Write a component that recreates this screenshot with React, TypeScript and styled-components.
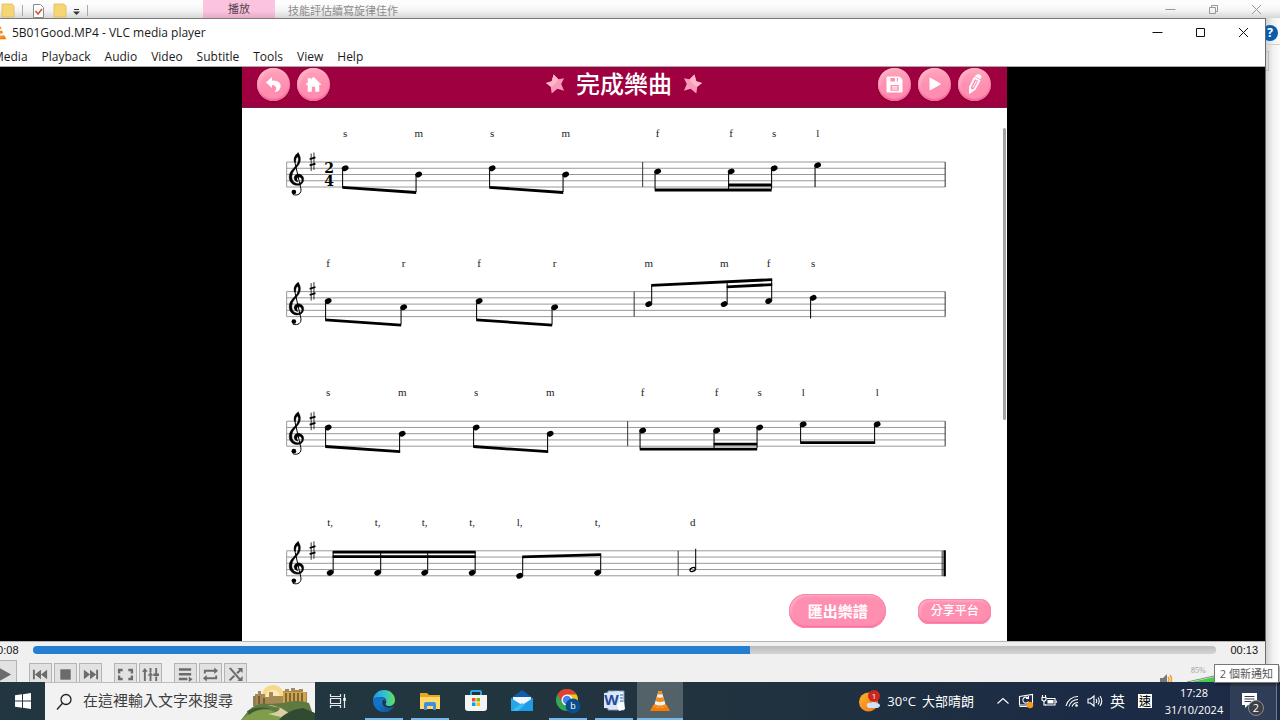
import React from "react";
import styled, { createGlobalStyle } from "styled-components";

const uiFont = '"Open Sans", "Noto Sans CJK TC", sans-serif';

const GlobalStyle = createGlobalStyle`
  *, *::before, *::after { box-sizing: border-box; }
  body { margin: 0; font-family: ${uiFont}; overflow: hidden; background: #fff; }
  button, input { font-family: inherit; margin: 0; }
  button { border: 0; padding: 0; background: none; color: inherit; }
  svg { display: block; flex: none; }
  h1, p { margin: 0; font-weight: inherit; }
`;

/* ---------- Desktop shell ---------- */

const Desktop = styled.div`
  height: 100vh;
  display: flex;
  flex-direction: column;
  overflow: hidden;
`;

const BackTitleBar = styled.div`
  flex: none;
  height: 18px;
  display: flex;
  align-items: stretch;
  padding-right: 2px;
  background: linear-gradient(#fdfdfd 20%, #f3f3f3 60%, #d6d6d6);
  color: #8b8b8b;
  font-size: 11px;
  overflow: hidden;
`;

const QuickAccess = styled.div`
  width: 203px;
  flex: none;
`;

const PlayTab = styled.div`
  width: 72px;
  flex: none;
  text-align: center;
  line-height: 18px;
  color: #54444b;
  background: linear-gradient(#fbc3de 60%, #e3abc6);
`;

const BackTitle = styled.div`
  flex: 1;
  padding-left: 13px;
  white-space: nowrap;
  line-height: 22px;
`;

const Middle = styled.div`
  flex: 1;
  min-height: 0;
  display: flex;
`;

const BackEdge = styled.div`
  flex: none;
  width: 14px;
  overflow: hidden;
  background: linear-gradient(to right, #d2d2d2, #f1f1f1 50%, #fcfcfc);
`;

const HelpStrip = styled.div`
  height: 27px;
  border-bottom: 1px solid #cfcfcf;
  padding-top: 7px;
`;

const HelpButton = styled.button`
  display: block;
  width: 16px;
  height: 16px;
  margin-left: -4px;
  border-radius: 50%;
  background: #0b5cad;
  color: #fff;
  font-size: 12px;
  font-weight: 700;
  line-height: 16px;
`;

const EdgeBox = styled.div`
  width: 3px;
  height: 20px;
  margin-top: 6px;
  border: 1px solid #bdbdbd;
  border-left: 0;
`;

/* ---------- Player window ---------- */

const PlayerWindow = styled.main`
  flex: 1;
  min-width: 0;
  margin-left: -16px;
  display: flex;
  flex-direction: column;
  background: #fff;
  border-top: 1px solid #7b7b7b;
  border-right: 1px solid #6b6b6b;
`;

const TitleBar = styled.div`
  flex: none;
  height: 27px;
  display: flex;
  align-items: center;
  gap: 5px;
  padding-left: 9px;
  font-size: 12px;
  color: #1a1a1a;
`;

const WindowTitle = styled.p`
  flex: 1;
  line-height: 18px;
`;

const WindowButtons = styled.div`
  display: flex;
`;

const WindowButton = styled.button<{ $faint?: boolean }>`
  width: 43px;
  height: 100%;
  display: flex;
  align-items: center;
  justify-content: center;
  color: ${(p) => (p.$faint ? "#999" : "#111")};
`;

const MenuBar = styled.nav`
  flex: none;
  height: 21px;
  display: flex;
  align-items: flex-end;
  gap: 14px;
  padding-left: 9px;
  border-bottom: 1px solid #a8a8a8;
`;

const MenuItem = styled.button`
  font-size: 12px;
  line-height: 18px;
  color: #1a1a1a;
`;

const Stage = styled.div`
  flex: 1;
  min-height: 0;
  display: flex;
  justify-content: center;
  background: #000;
`;

const Sheet = styled.section`
  position: relative;
  height: 100%;
  aspect-ratio: 4 / 3;
  display: flex;
  flex-direction: column;
  background: #fff;
`;

const SheetHeader = styled.header`
  flex: none;
  height: 41px;
  display: grid;
  grid-template-columns: 1fr auto 1fr;
  align-items: center;
  padding: 0 16px 6px 15px;
  background: #9f003f;
  border-bottom: 1px solid #6d2443;
`;

const ButtonGroup = styled.div<{ $end?: boolean }>`
  display: flex;
  gap: 7px;
  justify-content: ${(p) => (p.$end ? "flex-end" : "flex-start")};
`;

const RoundButton = styled.button`
  width: 33px;
  height: 33px;
  border-radius: 50%;
  display: flex;
  align-items: center;
  justify-content: center;
  color: #fff;
  background: linear-gradient(#ffa4bd, #ff8eb0 55%, #ff8fb2);
  box-shadow: inset 0 -2px 2px #f2659a, inset 2px 2px 3px #ffb3c6, 0 1px 2px #7a0030;
`;

const SheetTitle = styled.h1`
  display: flex;
  align-items: center;
  gap: 11px;
  color: #fff;
  font-size: 24px;
  font-weight: 500;
  line-height: 34px;
`;

const Score = styled.div`
  flex: 1;
  min-height: 0;
  & > svg { width: 100%; height: 100%; }
`;

const ScrollThumb = styled.div`
  position: absolute;
  top: 61px;
  right: 1px;
  width: 3px;
  height: 292px;
  border-radius: 2px;
  background: #a3a3a3;
`;

const SheetFooter = styled.footer`
  flex: none;
  height: 47px;
  display: flex;
  justify-content: flex-end;
  align-items: center;
  gap: 32px;
  padding: 0 16px 13px 0;
`;

const PillButton = styled.button<{ $large?: boolean }>`
  width: ${(p) => (p.$large ? 97 : 73)}px;
  height: ${(p) => (p.$large ? 34 : 25)}px;
  border-radius: ${(p) => (p.$large ? 17 : 11)}px;
  font-size: ${(p) => (p.$large ? 15 : 12)}px;
  font-weight: ${(p) => (p.$large ? 700 : 500)};
  line-height: 22px;
  white-space: nowrap;
  color: #fff;
  background: #ff8fb1;
  box-shadow: inset 0 0 0 1px #f88bad, inset 0 -2px 2px #fb6a9d, inset 2px 2px 3px #ffb3c6;
`;

const SeekRow = styled.div`
  flex: none;
  height: 17px;
  display: flex;
  align-items: center;
  gap: 14px;
  padding: 0 7px;
  background: #f0f0f0;
  border-top: 1px solid #b5b5b5;
  font: 11px/16px "Liberation Sans", sans-serif;
  color: #111;
`;

const SeekBar = styled.input`
  flex: 1;
  min-width: 0;
  height: 8px;
  appearance: none;
  border-radius: 4px;
  background: linear-gradient(to right, #247fd3 60.6%, transparent 60.6%), linear-gradient(#bcbcbc, #d4d4d4);
  &::-webkit-slider-thumb { appearance: none; width: 0; height: 0; }
`;

const Controls = styled.div`
  flex: none;
  height: 24px;
  display: flex;
  align-items: flex-start;
  gap: 12px;
  padding: 2px 42px 0 7px;
  background: #f0f0f0;
  overflow: hidden;
`;

const ControlGroup = styled.div`
  display: flex;
  gap: 2px;
  padding-top: 3px;
`;

const ControlButton = styled.button<{ $big?: boolean }>`
  width: ${(p) => (p.$big ? 26 : 23)}px;
  height: ${(p) => (p.$big ? 28 : 23)}px;
  display: flex;
  align-items: center;
  justify-content: center;
  border: 1px solid #b4b4b4;
  background: #e2e2e2;
  color: #6b6b6b;
`;

const Volume = styled.div`
  display: flex;
  align-items: flex-start;
  margin-left: auto;
  gap: 13px;
`;

const VolumeLabel = styled.span`
  display: block;
  font: 8px/8px "Liberation Serif", serif;
  color: #9a9a9a;
  padding: 7px 0 0 4px;
`;

/* ---------- Taskbar ---------- */

const Taskbar = styled.footer`
  position: relative;
  flex: none;
  height: 38px;
  display: flex;
  background: linear-gradient(to right, #213640, #22363f 35%, #20323f 60%, #1c2b45 85%, #1d2b46);
  color: #fff;
`;

const StartButton = styled.button`
  width: 45px;
  display: flex;
  align-items: center;
  justify-content: center;
`;

const SearchBox = styled.label`
  flex: none;
  width: 270px;
  display: flex;
  align-items: center;
  background: #f2f2f2;
  border-top: 1px solid #bdbdbd;
  padding-left: 11px;
  overflow: hidden;
`;

const SearchInput = styled.input`
  flex: 1;
  min-width: 0;
  height: 32px;
  border: 0;
  padding: 0 0 4px 11px;
  background: none;
  font-size: 15px;
  &::placeholder { color: #3d3d3d; opacity: 1; }
`;

const AppButton = styled.button<{ $running?: boolean; $active?: boolean }>`
  width: 46px;
  display: flex;
  align-items: center;
  justify-content: center;
  background-color: ${(p) => (p.$active ? "#536269" : "transparent")};
  background-image: ${(p) => (p.$running ? "linear-gradient(#76b9ed, #76b9ed)" : "none")};
  background-repeat: no-repeat;
  background-size: ${(p) => (p.$active ? "100% 2px" : "38px 2px")};
  background-position: center bottom;
`;

const Tray = styled.div`
  margin-left: auto;
  display: flex;
  align-items: center;
`;

const Weather = styled.button`
  display: flex;
  align-items: center;
  gap: 6px;
  font-size: 13px;
  line-height: 20px;
  padding-right: 21px;
  white-space: nowrap;
`;

const TrayIcons = styled.div`
  display: flex;
  align-items: center;
  gap: 6px;
`;

const TrayButton = styled.button`
  min-width: 15px;
  font-size: 15px;
  line-height: 20px;
  display: flex;
  justify-content: center;
`;

const InputMode = styled.button`
  width: 14px;
  height: 14px;
  margin: 0 6px 0 13px;
  background: #fff;
  color: #111;
  font-size: 12px;
  font-weight: 500;
  line-height: 13px;
`;

const Clock = styled.time`
  width: 72px;
  text-align: center;
  font-size: 11px;
  line-height: 17px;
`;

const NoticeButton = styled.button`
  position: relative;
  align-self: stretch;
  width: 46px;
  display: flex;
  align-items: center;
  justify-content: center;
  padding-right: 6px;
  background: #303d56;
`;

const NoticeCount = styled.span`
  position: absolute;
  right: 12px;
  bottom: 4px;
  width: 16px;
  height: 16px;
  border-radius: 50%;
  border: 1px solid #8b8f96;
  background: #3b4044;
  font-size: 11px;
  line-height: 14px;
`;

const ShowDesktop = styled.button`
  align-self: stretch;
  width: 4px;
  border-left: 1px solid #6f7a8c;
`;

const Tooltip = styled.div`
  position: absolute;
  right: 1px;
  bottom: 37px;
  padding: 0 5px;
  border: 1px solid #777;
  background: #fff;
  color: #575757;
  font-size: 11px;
  line-height: 17px;
  white-space: nowrap;
  box-shadow: 2px 2px 2px #0005;
`;

/* ---------- Score drawing ---------- */

type Note = { x: number; step: number; lyric: string; up?: boolean; half?: boolean };
type Beam = { x1: number; y1: number; x2: number; y2: number };
type StaffLine = { notes: Note[]; beams: Beam[]; stems: number[]; bar: number; time?: boolean; final?: boolean };

const GAP = 6.25;
const LEFT = 44.5;
const RIGHT = 703;

/* step counts half spaces down from the top line; beams and stem ends are measured from the top line */
const staves: StaffLine[] = [
  {
    time: true,
    bar: 400.5,
    notes: [
      { x: 103, step: 2, lyric: "s" }, { x: 176.5, step: 4, lyric: "m" },
      { x: 250, step: 2, lyric: "s" }, { x: 323.5, step: 4, lyric: "m" },
      { x: 415.5, step: 3, lyric: "f" }, { x: 489, step: 3, lyric: "f" },
      { x: 532, step: 2, lyric: "s" }, { x: 575.5, step: 1, lyric: "l" },
    ],
    stems: [25, 30, 25, 30, 27, 27, 27, 25],
    beams: [
      { x1: 100, y1: 25.3, x2: 174, y2: 30.5 }, { x1: 247, y1: 25.3, x2: 321, y2: 30.5 },
      { x1: 412.5, y1: 28, x2: 529.5, y2: 28 }, { x1: 486, y1: 23, x2: 529.5, y2: 23 },
    ],
  },
  {
    bar: 392,
    notes: [
      { x: 86, step: 3, lyric: "f" }, { x: 161.5, step: 5, lyric: "r" },
      { x: 237, step: 3, lyric: "f" }, { x: 312.5, step: 5, lyric: "r" },
      { x: 406.5, step: 4, lyric: "m", up: true }, { x: 482, step: 4, lyric: "m", up: true },
      { x: 526.5, step: 3, lyric: "f", up: true }, { x: 571, step: 2, lyric: "s" },
    ],
    stems: [28, 33, 28, 33, -6, -9, -12, 27],
    beams: [
      { x1: 83, y1: 28.3, x2: 159, y2: 33.5 }, { x1: 234, y1: 28.3, x2: 310, y2: 33.5 },
      { x1: 409, y1: -6.3, x2: 530, y2: -12 }, { x1: 484.5, y1: -4.800, x2: 530, y2: -7 },
    ],
  },
  {
    bar: 385.5,
    notes: [
      { x: 86, step: 2, lyric: "s" }, { x: 160, step: 4, lyric: "m" },
      { x: 234, step: 2, lyric: "s" }, { x: 308, step: 4, lyric: "m" },
      { x: 400.5, step: 3, lyric: "f" }, { x: 474.5, step: 3, lyric: "f" },
      { x: 517.5, step: 2, lyric: "s" }, { x: 561, step: 1, lyric: "l" }, { x: 635, step: 1, lyric: "l" },
    ],
    stems: [25, 30, 25, 30, 27, 27, 27, 21, 21],
    beams: [
      { x1: 83, y1: 25.3, x2: 158, y2: 30.5 }, { x1: 231, y1: 25.3, x2: 306, y2: 30.5 },
      { x1: 397.5, y1: 28, x2: 515, y2: 28 }, { x1: 471.5, y1: 23, x2: 515, y2: 23 },
      { x1: 558, y1: 21.5, x2: 633, y2: 21.5 },
    ],
  },
  {
    bar: 436,
    final: true,
    notes: [
      { x: 88, step: 7, lyric: "t,", up: true }, { x: 135.5, step: 7, lyric: "t,", up: true },
      { x: 182.5, step: 7, lyric: "t,", up: true }, { x: 230, step: 7, lyric: "t,", up: true },
      { x: 277.5, step: 8, lyric: "l,", up: true }, { x: 355.5, step: 7, lyric: "t,", up: true },
      { x: 450.5, step: 6, lyric: "d", up: true, half: true },
    ],
    stems: [1, 1, 1, 1, 6, 4, -2],
    beams: [
      { x1: 90.5, y1: 1.3, x2: 233.5, y2: 1.3 }, { x1: 90.5, y1: 5.8, x2: 233.5, y2: 5.8 },
      { x1: 280, y1: 6, x2: 359, y2: 3.8 },
    ],
  },
];

const Clef = () => (
  <g transform="translate(37.7 -41.7) scale(.3333)" fill="none" stroke="#000" strokeLinecap="round">
    <circle cx="42" cy="215" r="7" fill="#000" stroke="none" />
    <path d="M40 223C54 228 66 219 63 205L46 130C42 112 47 104 54 101" strokeWidth="3" />
    <path
      d="M55 98C63 108 64 123 56 134C49 144 37 152 36 168C35 180 42 189 53 190C62 190 67 184 66 178C65 171 59 169 54 171C50 173 50 179 54 185C45 183 42 176 43 171C45 163 53 160 60 162C69 165 73 173 71 181C69 191 60 196 50 195C37 194 28 184 28 171C28 151 45 143 52 131C57 122 57 112 53 110C50 109 47 117 47 127L43 124C41 111 49 100 55 98Z"
      fill="#000"
      stroke="#000"
      strokeWidth="1.500"
    />
  </g>
);

const Sharp = () => (
  <g stroke="#000" fill="none">
    <path d="M69-8.500V9M71.800-9.500V8" strokeWidth=".8" />
    <path d="M67.500-2.800L73.300-4.600M67.500 3.400L73.300 1.600" strokeWidth="1.800" />
  </g>
);

const Staff = ({ line, y }: { line: StaffLine; y: number }) => (
  <g transform={`translate(0 ${y})`}>
    <g stroke="#999" strokeWidth="1">
      {[0, 1, 2, 3, 4].map((n) => <path key={n} d={`M${LEFT} ${n * GAP}H${RIGHT}`} />)}
      <path d={`M${LEFT} 0V25`} />
    </g>
    <path d={`M${line.bar} 0V25M${line.final ? 700 : RIGHT} 0V25`} stroke="#333" strokeWidth="1" />
    {line.final && <path d="M702.5 -.5V25.5" stroke="#000" strokeWidth="2.4" />}
    <Clef />
    <Sharp />
    {line.time && (
      <g fontFamily="DejaVu Serif, serif" fontWeight="700" fontSize="14" textAnchor="middle">
        <text x="87" y="11">2</text>
        <text x="87" y="24">4</text>
      </g>
    )}
    {line.notes.map((n, i) => {
      const ny = (n.step * GAP) / 2;
      const sx = n.up ? n.x + 3 : n.x - 2.6;
      return (
        <g key={i}>
          <text x={n.x} y="-25" textAnchor="middle" fontFamily="Liberation Serif, serif" fontSize="11" fill="#222">{n.lyric}</text>
          <ellipse
            cx={n.x}
            cy={ny}
            rx={n.half ? 2.8 : 3.5}
            ry={n.half ? 1.8 : 2.7}
            fill={n.half ? "none" : "#000"}
            stroke={n.half ? "#000" : "none"}
            strokeWidth="1.3"
            transform={`rotate(-24 ${n.x} ${ny})`}
          />
          <path d={`M${sx} ${ny}V${line.stems[i]}`} stroke="#111" strokeWidth="1.1" />
        </g>
      );
    })}
    {line.beams.map((b, i) => (
      <path key={i} d={`M${b.x1} ${b.y1 - 1.4}L${b.x2} ${b.y2 - 1.4}V${b.y2 + 1.4}L${b.x1} ${b.y1 + 1.4}Z`} />
    ))}
  </g>
);

/* ---------- Icons ---------- */

const Star = ({ flip }: { flip?: boolean }) => (
  <svg width="19" height="20" viewBox="0 0 20 20">
    <g transform={flip ? "translate(20 0) scale(-1 1)" : undefined}>
      <path d="M8 0L13 5L19 4L16 10L19 17L12 15L6 20L5 13L0 9L6 7Z" fill="#f69bb8" />
      <path d="M8 0L13 5L10 10L6 7ZM0 9L6 7L10 10L5 13Z" fill="#ffb6ca" />
    </g>
  </svg>
);

const Cone = ({ size }: { size: number }) => (
  <svg width={size} height={size} viewBox="0 0 22 22">
    <path d="M4 15H18L21 21H1Z" fill="#f57c00" />
    <path d="M9.5 1H12.500L17 16C14 18.500 8 18.500 5 16Z" fill="#f6f2ee" />
    <path d="M9.500 1H12.500L13.400 4Q11 5 8.600 4ZM7.800 7Q11 8.500 14.300 7L15.500 11Q11 13 6.600 11ZM5.700 14Q11 17 16.400 14L17 16C14 18.500 8 18.500 5 16Z" fill="#f28a1d" />
  </svg>
);

const Folder = ({ size }: { size: number }) => (
  <svg width={size} height={size} viewBox="0 0 22 22">
    <path d="M1 3H8L10 5H21V19H1Z" fill="#e9a620" />
    <path d="M1 7H21V19H1Z" fill="#ffd867" />
    <path d="M5 20V14Q5 12 7 12H15Q17 12 17 14V20H14V16H8V20Z" fill="#3f8fda" />
  </svg>
);

const QuickIcons = () => (
  <svg width="100" height="18" viewBox="0 0 100 18">
    <path d="M2 4H12L14 6V17H2ZM54 4H64L66 6V17H54Z" fill="#f6d573" stroke="#dfb75a" strokeWidth=".8" />
    <path d="M22.500 5V16M87.500 5V16" stroke="#aaa" />
    <path d="M33.500 4.500H40.500L43.500 7.500V17.500H33.500Z" fill="#fff" stroke="#8b8b8b" />
    <path d="M35.500 11L38 14L42 9" fill="none" stroke="#d9562b" strokeWidth="1.6" />
    <path d="M74 9.500H79" stroke="#333" />
    <path d="M73 11.500H80L76.500 15Z" fill="#333" />
  </svg>
);

const WinGlyph = ({ kind }: { kind: "min" | "max" | "restore" | "close" }) => (
  <svg width="11" height="11" viewBox="0 0 11 11" fill="none" stroke="currentColor">
    {kind === "min" && <path d="M.5 5.500H10.500" />}
    {kind === "max" && <path d="M1.500 1.500H9.500V9.500H1.500Z" />}
    {kind === "restore" && <path d="M1.500 3.500H7.500V9.500H1.500ZM3.500 3V1.500H9.500V7.500H8" />}
    {kind === "close" && <path d="M1 1L10 10M10 1L1 10" />}
  </svg>
);

const BackIcon = () => (
  <svg width="19" height="18" viewBox="0 0 19 18" fill="#fff">
    <path d="M2 7.500L8 2V5.500C14 5 17.500 8 16.500 12.500C15.500 15.500 13 17 10.500 17C13.500 14 12.500 10 8 10V13Z" />
  </svg>
);
const HomeIcon = () => (
  <svg width="17" height="17" viewBox="0 0 17 17" fill="#fff">
    <path d="M8.500 1L16 8.500H14V15.500H10.500V10.500H6.500V15.500H3V8.500H1L3 6.500V2.500H5.500V4Z" stroke="#fff" strokeWidth=".6" strokeLinejoin="round" />
  </svg>
);
const SaveIcon = () => (
  <svg width="17" height="17" viewBox="0 0 17 17">
    <path d="M1 1H13.500L16 3.500V16H1Z" fill="#fff" stroke="#fff" strokeLinejoin="round" />
    <path d="M4.500 2H9V5.500H4.500ZM10.800 2H12V5.500H10.800ZM4.500 9H12.800V14.800H4.500Z" fill="#ff8fb1" />
    <path d="M6 10.800H11.500M6 13H11.500" stroke="#fff" strokeWidth="1.200" />
  </svg>
);
const PlayIcon = () => (
  <svg width="15" height="16" viewBox="0 0 15 16"><path d="M3 2L13.500 8L3 14Z" fill="#fff" stroke="#fff" strokeLinejoin="round" /></svg>
);
const PencilIcon = () => (
  <svg width="16" height="22" viewBox="0 0 16 22" fill="none" stroke="#fff" strokeLinejoin="round">
    <path d="M7.500 5L12.500 7.500L7.500 16.500L3 19L3 14Z" strokeWidth="1.800" />
    <path d="M8.500 3.500L9.500 2Q12 .8 14 3L13.500 5.500Z" fill="#fff" />
    <path d="M9.500 8L5.800 14.500" strokeWidth="1" />
    <path d="M3 15.500L2.500 20.500L6.500 17.500Z" fill="#fff" />
  </svg>
);

const controlPaths: Record<string, React.ReactNode> = {
  play: <path d="M2 1L16 9L2 17Z" />,
  prev: <path d="M1 4H3V14H1ZM9.500 4V14L3 9ZM16 4V14L9.500 9Z" />,
  stop: <path d="M3.500 3.500H14.500V14.500H3.500Z" />,
  next: <path d="M17 4H15V14H17ZM8.500 4V14L15 9ZM2 4V14L8.500 9Z" />,
  full: <path d="M1 3H6V5.500H3.500V8H1ZM12 3H17V8H14.500V5.500H12ZM1 10H3.500V12.500H6V15H1ZM14.500 10H17V15H12V12.500H14.500Z" />,
  equalizer: <path d="M2 6H4V16H2ZM8 2H10V7H8ZM8 10H10V16H8ZM14 2H16V8H14ZM14 11H16V16H14ZM0 6L3 2L6 6ZM6 10L9 6.500L12 10ZM12 8H18V10.500H12Z" />,
  list: <path d="M2 2.500H15V5H2ZM2 7.500H15V10H2ZM2 12.500H11V15H2ZM12.500 11L16.500 14L12.500 17Z" />,
  loop: <path d="M2 8V4H13V1.500L17 5L13 8.500V6H4V8ZM16 10V14H5V16.500L1 13L5 9.500V12H14V10Z" />,
  shuffle: <path d="M2 2.500L4 1.500L14 13L16.500 10.500V16H11L12.500 14.500ZM16.500 2V7.500L14.500 5.500L11.500 8.500L9.800 7L13 4L11 2ZM2 14.500L7 9.500L8.500 11L3.500 16Z" />,
};

const ControlIcon = ({ name }: { name: string }) => (
  <svg width="17" height="17" viewBox="0 0 18 18" fill="currentColor">{controlPaths[name]}</svg>
);

const Castle = () => (
  <svg width="74" height="36" viewBox="0 0 74 36">
    <circle cx="32" cy="12" r="11" fill="#f8d88a" />
    <circle cx="32" cy="13" r="7" fill="#fdeabb" />
    <path d="M14 10H17V7H20V10H24V13H28V8H32V12H42V7H44V5H48V7H50V4H54V6H58V5H62V8H66V22L42 26H14Z" fill="#a68a55" />
    <path d="M42 8H65V19H42Z" fill="#cda54c" />
    <path d="M45 9V19M49 9V19M53 9V19M57 9V19M61 9V19M18 12V20M23 14V20" stroke="#66502c" strokeWidth="1.500" />
    <path d="M12 12H15V22H12Z" fill="#8f8058" />
    <path d="M0 36L8 26Q16 18 28 20L42 19Q56 15 68 19L74 36Z" fill="#5f7940" />
    <path d="M0 36L10 28Q22 22 34 28L46 36Z" fill="#7f9d4b" />
    <path d="M26 21Q36 21 39 25Q36 29 27 30L44 34L48 29L40 24Z" fill="#d9cfa2" />
    <path d="M38 36Q46 26 62 24L74 29V36Z" fill="#314a32" />
    <path d="M6 27Q20 21 30 25Q16 24 8 31Z" fill="#3f5934" />
  </svg>
);

const TaskViewIcon = () => (
  <svg width="18" height="18" viewBox="0 0 18 18" fill="none" stroke="#e6eaec" strokeWidth="1.200">
    <path d="M1.500 2V4.500H11.500V2M1.500 16V13.500H11.500V16M1.500 6.500H11.500V11.500H1.500ZM15.500 2V16" />
    <path d="M14.300 6H16.700V9H14.300Z" fill="#fff" stroke="none" />
  </svg>
);

const EdgeIcon = () => (
  <svg width="24" height="24" viewBox="0 0 24 24">
    <defs>
      <linearGradient id="edgeTop" x1="0" x2="1"><stop stopColor="#1b9de2" /><stop offset=".55" stopColor="#35c1d0" /><stop offset="1" stopColor="#66e04f" /></linearGradient>
      <linearGradient id="edgeLow" x1="0" y1="0" x2="1" y2="1"><stop stopColor="#1580d4" /><stop offset="1" stopColor="#114a92" /></linearGradient>
    </defs>
    <path d="M1 11C2 4 7 1 12 1C19 1 23 6 23 11C23 15 20 17 17 17C14 17 13 15.500 14 14C15 12 14 8 9 8C5 8 2 9 1 11Z" fill="url(#edgeTop)" />
    <path d="M1 11C2 8.500 5 7.500 8 8C12 8 14 11 14 12C9 9 6 14 9 17.500C12 21 18 20 22 17C19 22 15 23.500 11 23C5 22.500 .5 17 1 11Z" fill="#1271c8" />
    <path d="M9 11C4 14 6 21 11 23C16 23.700 20 21 22 17C18 20 13 19 11 16C10 14 10 12 11 11Z" fill="url(#edgeLow)" />
  </svg>
);

const StoreIcon = () => (
  <svg width="24" height="24" viewBox="0 0 24 24">
    <path d="M7 7V3Q7 2 8 2H16Q17 2 17 3V7" fill="none" stroke="#2aa5e6" strokeWidth="2" />
    <path d="M1 6H23V19Q23 22 20 22H4Q1 22 1 19Z" fill="#f4f5f6" />
    <path d="M8 9H11.500V12.500H8Z" fill="#f05025" /><path d="M12.500 9H16V12.500H12.500Z" fill="#7eb900" />
    <path d="M8 13.500H11.500V17H8Z" fill="#00a3ee" /><path d="M12.500 13.500H16V17H12.500Z" fill="#fdb813" />
  </svg>
);

const MailIcon = () => (
  <svg width="24" height="24" viewBox="0 0 24 24">
    <path d="M1 9L12 1L23 9V14H1Z" fill="#0d5cad" />
    <path d="M3 8H21V15H3Z" fill="#f2f6fa" />
    <path d="M1 9L12 16L1 22ZM23 9L12 16L23 22Z" fill="#2ba3e8" />
    <path d="M1 22L12 14L23 22Z" fill="#35bdf4" /><path d="M23 9V22H8Z" fill="#1f9ce8" />
  </svg>
);

const ChromeIcon = () => (
  <svg width="26" height="26" viewBox="0 0 26 26">
    <circle cx="12" cy="12" r="11" fill="#33a852" />
    <path d="M2.500 6.500A11 11 0 0 1 21.500 6.500H12L7 14Z" fill="#e33e2f" />
    <path d="M21.500 6.500A11 11 0 0 1 12 23L16.500 13L12 6.500Z" fill="#fbc116" />
    <circle cx="12" cy="12" r="5.500" fill="#fff" /><circle cx="12" cy="12" r="4.200" fill="#4285f4" />
    <circle cx="18" cy="18" r="7.500" fill="#0d4d8b" />
    <text x="18" y="21" fill="#fff" fontSize="9" textAnchor="middle">b</text>
  </svg>
);

const WordIcon = () => (
  <svg width="22" height="22" viewBox="0 0 22 22">
    <path d="M5 1H21V20H5Z" fill="#eef3fa" stroke="#7796c8" />
    <path d="M17 5H20M17 8H20M17 11H20" stroke="#2f5fae" />
    <path d="M1 3L16 1V19L1 18Z" fill="#dbe7f7" />
    <text x="8.500" y="15" fill="#1f4e9c" fontSize="15" fontWeight="700" textAnchor="middle">W</text>
    <path d="M14 14L21 12L22 19L16 21Z" fill="#fff" />
  </svg>
);

const WeatherIcon = () => (
  <svg width="23" height="24" viewBox="0 0 23 24">
    <defs><linearGradient id="sun" x1="0" y1="0" x2="1" y2="1"><stop stopColor="#ffb22e" /><stop offset="1" stopColor="#f0750f" /></linearGradient></defs>
    <circle cx="10.500" cy="13" r="9.500" fill="url(#sun)" />
    <path d="M11 19Q8 18 9 15Q11 13 13 14Q16 11 18 14Q22 14 22 17Q21 19 19 19Z" fill="#cfe2fb" />
    <circle cx="16" cy="7" r="6" fill="#c9281f" />
    <text x="16" y="10" fontSize="8" fill="#fff" textAnchor="middle">1</text>
  </svg>
);

const trayPaths: Record<string, React.ReactNode> = {
  chevron: <path d="M2.500 10.500L8 5.500L13.500 10.500" />,
  update: <><path d="M1.500 3.500L14.500 1.500V12H1.500ZM1.500 13.500H9" /><path d="M10 5A3 3 0 1 0 10.500 8.500M10.500 3V5.500H8" /><circle cx="12" cy="12" r="3.200" fill="#f59a1c" stroke="none" /></>,
  battery: <><path d="M5.500 5.500H14V12H4" /><path d="M1.500 2V4.500M4.500 2V4.500M1 4.500H5V7L3 8.500L1 7ZM3 8V12H5" /><path d="M7 7.500H12V10H7Z" fill="#fff" /><path d="M15.200 7.500V10" /></>,
  wifi: <><path d="M2 13A12 12 0 0 1 14 3.500M5 13.500A9 9 0 0 1 14 6.500M8 13.500A6.500 6.500 0 0 1 14 9.500" /><circle cx="12.500" cy="12.500" r="1.300" fill="#fff" stroke="none" /></>,
  sound: <path d="M1 6V10H3.500L7 13V3L3.500 6ZM9 6Q10.500 8 9 10M11 4.500Q13.500 8 11 11.500M13 3Q16.500 8 13 13" />,
};

const TrayIcon = ({ name }: { name: string }) => (
  <svg width="17" height="16" viewBox="0 0 17 16" fill="none" stroke="#fff" strokeWidth="1.100">{trayPaths[name]}</svg>
);

const controlGroups = [
  ["prev", "stop", "next"],
  ["full", "equalizer"],
  ["list", "loop", "shuffle"],
];

export default function App() {
  return (
    <Desktop>
      <GlobalStyle />
      <BackTitleBar>
        <QuickAccess><QuickIcons /></QuickAccess>
        <PlayTab>播放</PlayTab>
        <BackTitle>技能評估續寫旋律佳作</BackTitle>
        <WindowButtons>
          <WindowButton $faint aria-label="Minimize folder"><WinGlyph kind="min" /></WindowButton>
          <WindowButton $faint aria-label="Restore folder"><WinGlyph kind="restore" /></WindowButton>
          <WindowButton $faint aria-label="Close folder"><WinGlyph kind="close" /></WindowButton>
        </WindowButtons>
      </BackTitleBar>

      <Middle>
        <PlayerWindow>
          <TitleBar>
            <Cone size={14} />
            <WindowTitle>5B01Good.MP4 - VLC media player</WindowTitle>
            <WindowButtons>
              <WindowButton aria-label="Minimize"><WinGlyph kind="min" /></WindowButton>
              <WindowButton aria-label="Maximize"><WinGlyph kind="max" /></WindowButton>
              <WindowButton aria-label="Close"><WinGlyph kind="close" /></WindowButton>
            </WindowButtons>
          </TitleBar>
          <MenuBar>
            {["Media", "Playback", "Audio", "Video", "Subtitle", "Tools", "View", "Help"].map((m) => (
              <MenuItem key={m}>{m}</MenuItem>
            ))}
          </MenuBar>

          <Stage>
            <Sheet>
              <SheetHeader>
                <ButtonGroup>
                  <RoundButton aria-label="Back"><BackIcon /></RoundButton>
                  <RoundButton aria-label="Home"><HomeIcon /></RoundButton>
                </ButtonGroup>
                <SheetTitle><Star />完成樂曲<Star flip /></SheetTitle>
                <ButtonGroup $end>
                  <RoundButton aria-label="Save"><SaveIcon /></RoundButton>
                  <RoundButton aria-label="Play song"><PlayIcon /></RoundButton>
                  <RoundButton aria-label="Edit"><PencilIcon /></RoundButton>
                </ButtonGroup>
              </SheetHeader>
              <Score>
                <svg viewBox="0 0 765 486" role="img" aria-label="Melody in G major">
                  {staves.map((line, i) => <Staff key={i} line={line} y={54 + i * 129.6} />)}
                </svg>
              </Score>
              <ScrollThumb />
              <SheetFooter>
                <PillButton $large>匯出樂譜</PillButton>
                <PillButton>分享平台</PillButton>
              </SheetFooter>
            </Sheet>
          </Stage>

          <SeekRow>
            <span>00:08</span>
            <SeekBar type="range" min={0} max={1000} defaultValue={606} aria-label="Position" />
            <span>00:13</span>
          </SeekRow>
          <Controls>
            <ControlButton $big aria-label="Play"><ControlIcon name="play" /></ControlButton>
            {controlGroups.map((group) => (
              <ControlGroup key={group[0]}>
                {group.map((name) => (
                  <ControlButton key={name} aria-label={name}><ControlIcon name={name} /></ControlButton>
                ))}
              </ControlGroup>
            ))}
            <Volume>
              <svg width="15" height="24" viewBox="0 0 15 24">
                <path d="M1 18H4L8 14V24H1Z" fill="#777" />
                <path d="M9 17Q11 19 9 22M11 15Q14 19 11 24" fill="none" stroke="#f39a2c" strokeWidth="1.500" />
              </svg>
              <div>
                <VolumeLabel>85%</VolumeLabel>
                <svg width="36" height="9" viewBox="0 0 36 9">
                  <path d="M0 8L36 0V9H0Z" fill="#46cf46" />
                  <path d="M0 7L36 -1" stroke="#888" />
                </svg>
              </div>
            </Volume>
          </Controls>
        </PlayerWindow>
        <BackEdge>
          <HelpStrip><HelpButton aria-label="Help">?</HelpButton></HelpStrip>
          <EdgeBox />
        </BackEdge>
      </Middle>

      <Taskbar>
        <StartButton aria-label="Start">
          <svg width="16" height="16" viewBox="0 0 16 16" fill="#fff">
            <path d="M0 2.300L7 1.300V7.500H0ZM8 1.200L16 0V7.500H8ZM0 8.500H7V14.700L0 13.700ZM8 8.500H16V16L8 14.800Z" />
          </svg>
        </StartButton>
        <SearchBox>
          <svg width="16" height="18" viewBox="0 0 16 18" fill="none" stroke="#222" strokeWidth="1.300">
            <circle cx="10" cy="6.500" r="5" /><path d="M6.500 10.200L1 16.500" />
          </svg>
          <SearchInput aria-label="搜尋" placeholder="在這裡輸入文字來搜尋" />
          <Castle />
        </SearchBox>
        <AppButton aria-label="Task view"><TaskViewIcon /></AppButton>
        <AppButton $running aria-label="Edge"><EdgeIcon /></AppButton>
        <AppButton $running aria-label="Files"><Folder size={22} /></AppButton>
        <AppButton aria-label="Store"><StoreIcon /></AppButton>
        <AppButton aria-label="Mail"><MailIcon /></AppButton>
        <AppButton $running aria-label="Chrome"><ChromeIcon /></AppButton>
        <AppButton $running aria-label="Word"><WordIcon /></AppButton>
        <AppButton $running $active aria-label="VLC"><Cone size={22} /></AppButton>
        <Tray>
          <Weather><WeatherIcon /><span>30°C</span><span>大部晴朗</span></Weather>
          <TrayIcons>
            {["chevron", "update", "battery", "wifi", "sound"].map((name) => (
              <TrayButton key={name} aria-label={name}><TrayIcon name={name} /></TrayButton>
            ))}
            <TrayButton>英</TrayButton>
          </TrayIcons>
          <InputMode>速</InputMode>
          <Clock>17:28<br />31/10/2024</Clock>
          <NoticeButton aria-label="Notifications">
            <svg width="18" height="18" viewBox="0 0 18 18">
              <path d="M1 1H16V13H7L4 16V13H1Z" fill="#fff" />
              <path d="M3.500 4.500H13.500M3.500 7H13.500M3.500 9.500H10" stroke="#303d56" />
            </svg>
            <NoticeCount>2</NoticeCount>
          </NoticeButton>
          <ShowDesktop aria-label="Show desktop" />
        </Tray>
        <Tooltip role="tooltip">2 個新通知</Tooltip>
      </Taskbar>
    </Desktop>
  );
}
